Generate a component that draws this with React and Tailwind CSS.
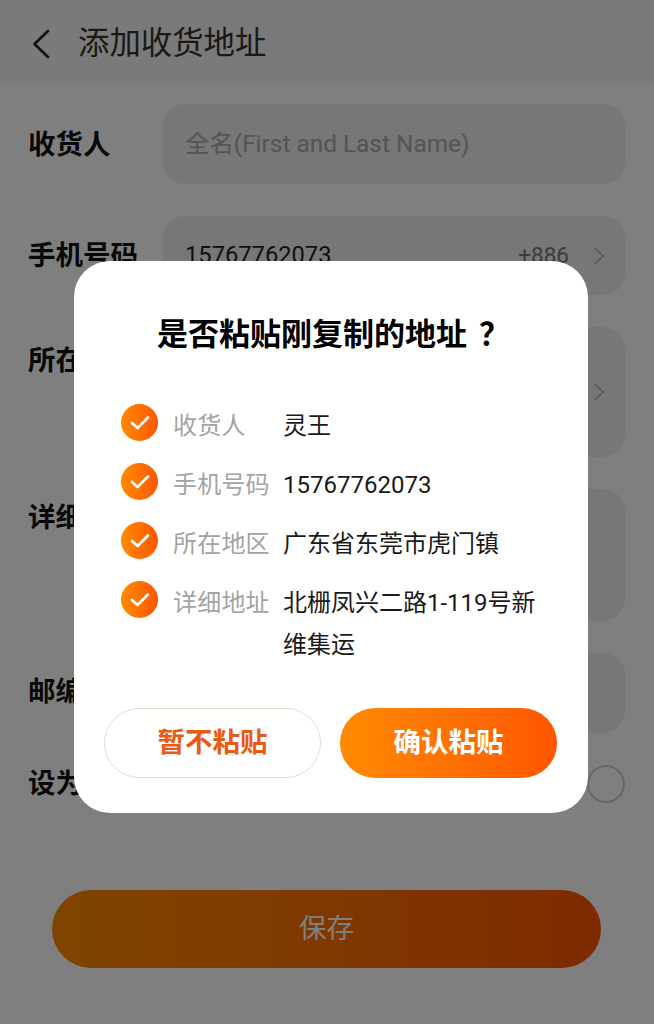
import React from "react";
import { ChevronRight } from "lucide-react";

const FONT = "font-['Roboto','Noto_Sans_CJK_SC',sans-serif]";

const BackArrow = () => (
  <svg width="20" height="32" viewBox="0 0 20 32" fill="none" stroke="#222" strokeWidth="2.6" strokeLinecap="round" strokeLinejoin="round">
    <path d="M17 3 3.5 16 17 29" />
  </svg>
);

const CheckBadge = () => (
  <span className="flex h-[37px] w-[37px] shrink-0 items-center justify-center rounded-full bg-gradient-to-r from-[#ff8a00] to-[#ff5500]">
    <svg width="22" height="22" viewBox="0 0 22 22" fill="none" stroke="#fff" strokeWidth="2.8" strokeLinecap="round" strokeLinejoin="round">
      <path d="M3 11 8.5 16 19 5.5" />
    </svg>
  </span>
);

const Field = ({ label, height, labelTop, children }) => (
  <div className="flex">
    <div className={`w-[163px] shrink-0 pl-[28px] text-[27.5px] leading-[40px] font-bold text-[#111] whitespace-nowrap ${labelTop}`}>
      {label}
    </div>
    <div className={`flex flex-1 items-center rounded-[22px] bg-[#eeeeee] pl-[22px] pr-[10px] text-[23.7px] ${height}`}>
      {children}
    </div>
  </div>
);

const ConfirmRow = ({ label, children }) => (
  <div className="flex items-start">
    <CheckBadge />
    <span className="ml-[15px] w-[110px] shrink-0 pt-[1px] text-[24px] leading-[42px] tracking-[0.2px] text-[#a3a3a3] whitespace-nowrap">
      {label}
    </span>
    <span className="pt-[1px] text-[24px] leading-[42px] text-[#1a1a1a]">{children}</span>
  </div>
);

export default function App() {
  return (
    <div className={`relative h-[1024px] w-[654px] overflow-hidden bg-white ${FONT}`}>
      {/* Header */}
      <header className="flex h-[83px] items-center bg-[#f5f5f5] pl-[31px] pt-[5px]">
        <BackArrow />
        <h1 className="ml-[27px] text-[31.4px] font-normal text-[#333]">添加收货地址</h1>
      </header>

      {/* Address form */}
      <main className="flex flex-col gap-[32px] pt-[21px] pr-[29px]">
        <Field label="收货人" height="h-[80px]" labelTop="pt-[21px]">
          <span className="text-[24.4px] text-[#a8a8a8]">全名(First and Last Name)</span>
        </Field>
        <Field label="手机号码" height="h-[79px]" labelTop="pt-[20px]">
          <span className="text-[#222]">15767762073</span>
          <span className="ml-auto text-[22.5px] text-[#777]">+886</span>
          <ChevronRight size={32} strokeWidth={1.2} className="ml-[14px] text-[#aaa]" />
        </Field>
        <Field label="所在地区" height="h-[130px]" labelTop="pt-[14px]">
          <ChevronRight size={32} strokeWidth={1.2} className="ml-auto text-[#aaa]" />
        </Field>
        <Field label="详细地址" height="h-[132px]" labelTop="pt-[9px]" />
        <Field label="邮编" height="h-[80px]" labelTop="pt-[19px]" />
        <div className="-mt-[1px] flex items-center justify-between pl-[28px]">
          <span className="text-[27.5px] leading-[40px] font-bold text-[#111]">设为默认</span>
          <span className="h-[38px] w-[38px] rounded-full border-2 border-[#cfcfcf]" />
        </div>
        <button className="mt-[54px] ml-[52px] h-[78px] w-[549px] rounded-full bg-gradient-to-r from-[#ff8a00] to-[#ff5500] text-[27.5px] text-white">
          保存
        </button>
      </main>

      {/* Paste confirmation dialog */}
      <div className="absolute inset-0 flex bg-black/50 pl-[74px] pt-[261px]">
        <div className="flex h-[552px] w-[514px] flex-col rounded-[36px] bg-white">
          <h2 className="pt-[53px] pl-[83px] text-[31px] leading-[42px] font-bold whitespace-nowrap text-black">
            是否粘贴刚复制的地址<span className="ml-[12px]">？</span>
          </h2>
          <div className="mt-[48px] flex flex-col gap-[16px] pl-[47px] pr-[50px]">
            <ConfirmRow label="收货人">灵王</ConfirmRow>
            <ConfirmRow label="手机号码">15767762073</ConfirmRow>
            <ConfirmRow label="所在地区">广东省东莞市虎门镇</ConfirmRow>
            <ConfirmRow label="详细地址">北栅凤兴二路1-119号新维集运</ConfirmRow>
          </div>
          <div className="mt-[42px] flex gap-[19px] pl-[30px]">
            <button className="h-[70px] w-[217px] rounded-full border border-[#e8dcc8] bg-white text-[27.5px] font-bold text-[#ea5a12]">
              暂不粘贴
            </button>
            <button className="h-[70px] w-[217px] rounded-full bg-gradient-to-r from-[#ff8a00] to-[#ff5500] text-[27.5px] font-bold text-white">
              确认粘贴
            </button>
          </div>
        </div>
      </div>
    </div>
  );
}
